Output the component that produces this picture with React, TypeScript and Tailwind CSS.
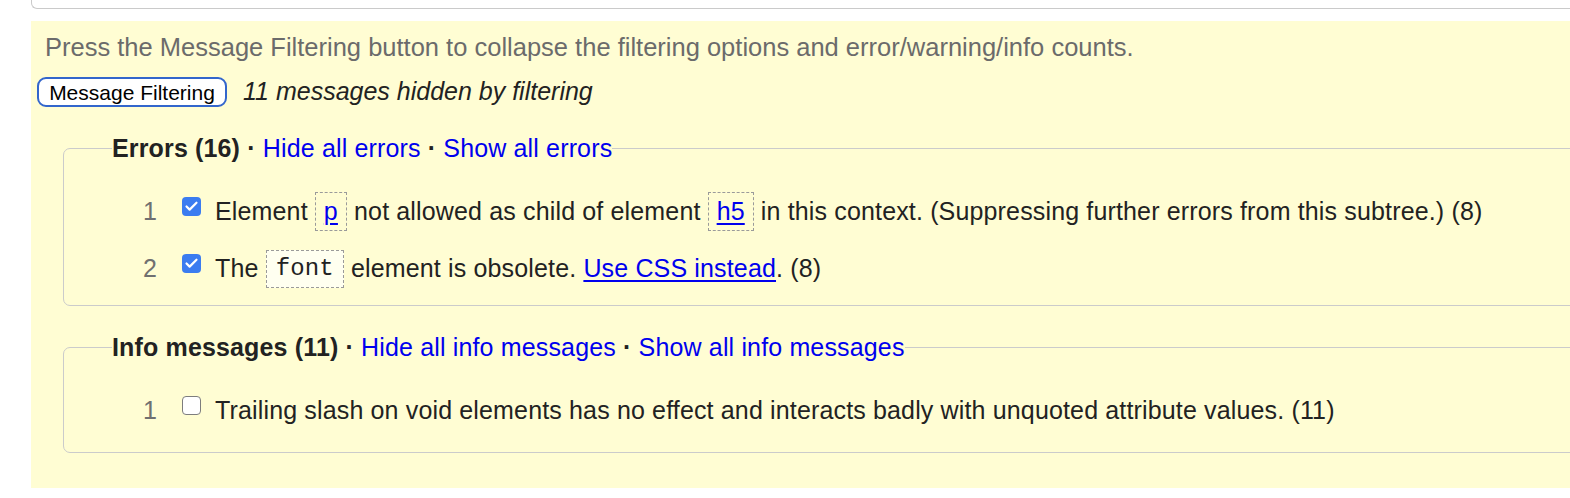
import { Check } from 'lucide-react'

type Part = string | { code: string; link?: boolean } | { href: string }

const errors: Part[][] = [
  [
    'Element ',
    { code: 'p', link: true },
    ' not allowed as child of element ',
    { code: 'h5', link: true },
    ' in this context. (Suppressing further errors from this subtree.) (8)',
  ],
  ['The ', { code: 'font' }, ' element is obsolete. ', { href: 'Use CSS instead' }, '. (8)'],
]

const infos: Part[][] = [
  ['Trailing slash on void elements has no effect and interacts badly with unquoted attribute values. (11)'],
]

function Box({ checked }: { checked: boolean }) {
  if (checked) {
    return (
      <span className="w-[19px] h-[19px] rounded-[4px] bg-[#3b7cf0] flex items-center justify-center mb-[10px] shrink-0">
        <Check size={15} color="#fff" strokeWidth={3.5} />
      </span>
    )
  }
  return (
    <span className="w-[19px] h-[19px] rounded-[4px] bg-white border border-[#7d7d7d] mb-[10px] shrink-0" />
  )
}

function Text({ part }: { part: Part }) {
  if (typeof part === 'string') return <span className="whitespace-pre">{part}</span>
  if ('href' in part) {
    return <a className="text-[#0000ee] underline underline-offset-[3px] decoration-[2px]">{part.href}</a>
  }
  if (part.link) {
    return (
      <span className="inline-flex items-center h-[39px] px-[8px] border border-dashed border-[#9a9a9a]">
        <a className="text-[#0000ee] underline underline-offset-[3px] decoration-[2px]">{part.code}</a>
      </span>
    )
  }
  return (
    <span className="inline-flex items-center h-[38px] px-[9px] border border-dashed border-[#9a9a9a] bg-[#fffff0] font-['Liberation_Mono',monospace] text-[24px]">
      {part.code}
    </span>
  )
}

function Row({ n, parts, checked }: { n: number; parts: Part[]; checked: boolean }) {
  return (
    <li className="flex items-center h-[39px]">
      <span className="w-[45px] text-right text-[#707070]">{n}</span>
      <span className="ml-[25px] flex">
        <Box checked={checked} />
      </span>
      <span className="ml-[14px] flex items-center text-[#222] tracking-[0.15px]">
        {parts.map((p, i) => (
          <Text key={i} part={p} />
        ))}
      </span>
    </li>
  )
}

function Group({
  title,
  hide,
  show,
  rows,
  checked,
  className,
}: {
  title: string
  hide: string
  show: string
  rows: Part[][]
  checked: boolean
  className: string
}) {
  return (
    <fieldset className={`ml-[32px] -mr-[20px] pl-[48px] border border-[#cbcbcb] rounded-[7px] ${className}`}>
      <legend className="leading-[28px] font-bold text-[#222] tracking-[0.15px]">
        {title} · <a className="font-normal text-[#0000ee]">{hide}</a>{' '}
        · <a className="font-normal text-[#0000ee]">{show}</a>
      </legend>
      <ol className="flex flex-col gap-[18px] mt-[30px]">
        {rows.map((r, i) => (
          <Row key={i} n={i + 1} parts={r} checked={checked} />
        ))}
      </ol>
    </fieldset>
  )
}

export default function App() {
  return (
    <div className="bg-white h-[498px] overflow-hidden font-['Liberation_Sans',Arial,sans-serif] text-[25px]">
      <div className="ml-[31px] h-[9px] border-l border-b border-[#cacaca] rounded-bl-[6px]" />
      <div className="mt-[12px] ml-[31px] h-[467px] bg-[#fffdd3] pt-[12px] overflow-hidden">
        <p className="ml-[14px] leading-[28px] text-[#6b6b6b] text-[25.5px]">
          Press the Message Filtering button to collapse the filtering options and error/warning/info counts.
        </p>
        <div className="mt-[16px] flex items-center h-[30px]">
          <button className="ml-[6px] w-[190px] h-[30px] rounded-[9px] bg-white border-2 border-[#3366cc] text-[21px] text-black leading-none">
            Message Filtering
          </button>
          <em className="ml-[16px] text-[#222]">11 messages hidden by filtering</em>
        </div>
        <Group
          className="mt-[27px] pb-[17px]"
          title="Errors (16)"
          hide="Hide all errors"
          show="Show all errors"
          rows={errors}
          checked
        />
        <Group
          className="mt-[27px] pb-[22px]"
          title="Info messages (11)"
          hide="Hide all info messages"
          show="Show all info messages"
          rows={infos}
          checked={false}
        />
      </div>
    </div>
  )
}
